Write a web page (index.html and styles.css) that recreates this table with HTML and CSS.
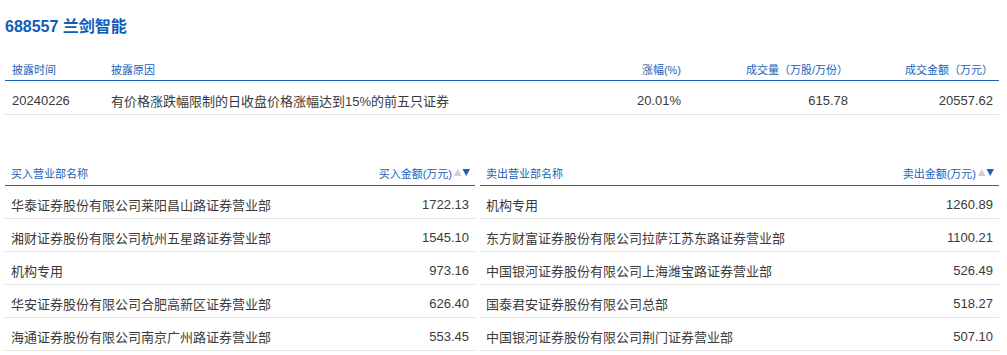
FILE: index.html
```html
<!DOCTYPE html>
<html lang="zh-CN">
<head>
<meta charset="utf-8">
<title>688557 兰剑智能</title>
<link rel="stylesheet" href="styles.css">
</head>
<body>
<div class="page">
  <h1 class="title">688557 兰剑智能</h1>

  <div class="summary">
    <div class="srow shead">
      <div class="c">披露时间</div>
      <div class="c">披露原因</div>
      <div class="c r">涨幅(%)</div>
      <div class="c r">成交量（万股/万份）</div>
      <div class="c r">成交金额（万元）</div>
    </div>
    <div class="srow sbody">
      <div class="c">20240226</div>
      <div class="c">有价格涨跌幅限制的日收盘价格涨幅达到15%的前五只证券</div>
      <div class="c r">20.01%</div>
      <div class="c r">615.78</div>
      <div class="c r">20557.62</div>
    </div>
  </div>

  <div class="deals">
    <div class="deal buy">
      <div class="drow dhead">
        <div class="c">买入营业部名称</div>
        <div class="c r">买入金额(万元)<svg class="sort" width="16" height="7" viewBox="0 0 16 7"><polygon points="0,7 3.75,0 7.5,7" fill="#cdcdcd"/><polygon points="8.5,0 16,0 12.25,7" fill="#1a5fb8"/></svg></div>
      </div>
      <div class="drow"><div class="c">华泰证券股份有限公司莱阳昌山路证券营业部</div><div class="c r">1722.13</div></div>
      <div class="drow"><div class="c">湘财证券股份有限公司杭州五星路证券营业部</div><div class="c r">1545.10</div></div>
      <div class="drow"><div class="c">机构专用</div><div class="c r">973.16</div></div>
      <div class="drow"><div class="c">华安证券股份有限公司合肥高新区证券营业部</div><div class="c r">626.40</div></div>
      <div class="drow"><div class="c">海通证券股份有限公司南京广州路证券营业部</div><div class="c r">553.45</div></div>
    </div>
    <div class="deal sell">
      <div class="drow dhead">
        <div class="c">卖出营业部名称</div>
        <div class="c r">卖出金额(万元)<svg class="sort" width="16" height="7" viewBox="0 0 16 7"><polygon points="0,7 3.75,0 7.5,7" fill="#cdcdcd"/><polygon points="8.5,0 16,0 12.25,7" fill="#1a5fb8"/></svg></div>
      </div>
      <div class="drow"><div class="c">机构专用</div><div class="c r">1260.89</div></div>
      <div class="drow"><div class="c">东方财富证券股份有限公司拉萨江苏东路证券营业部</div><div class="c r">1100.21</div></div>
      <div class="drow"><div class="c">中国银河证券股份有限公司上海潍宝路证券营业部</div><div class="c r">526.49</div></div>
      <div class="drow"><div class="c">国泰君安证券股份有限公司总部</div><div class="c r">518.27</div></div>
      <div class="drow"><div class="c">中国银河证券股份有限公司荆门证券营业部</div><div class="c r">507.10</div></div>
    </div>
  </div>
</div>
</body>
</html>
```

FILE: styles.css
```css
* { box-sizing: border-box; }
html, body {
  margin: 0;
  padding: 0;
  background: #ffffff;
}
body {
  font-family: "Liberation Sans", "Noto Sans CJK SC", sans-serif;
  color: #3a3a3a;
}
.page {
  padding: 0 8px 0 5px;
}
.title {
  margin: 0;
  padding-top: 17px;
  height: 37px;
  line-height: 20px;
  font-size: 16px;
  font-weight: bold;
  color: #0f5cb8;
}
.summary {
  margin-top: 20px;
}
.srow {
  display: grid;
  grid-template-columns: 100px 442px 140px 167px 145px;
  align-items: center;
}
.c {
  padding: 0 6px;
  white-space: nowrap;
}
.c.r { text-align: right; }
.shead {
  height: 24px;
  border-bottom: 1px solid #1d62b8;
  font-size: 11px;
  color: #1a5fb8;
}
.shead .c:first-child { padding-left: 7px; }
.sbody {
  height: 34px;
  padding-top: 5px;
  border-bottom: 1px solid #e3e3e3;
  font-size: 13px;
}
.sbody .c:first-child { padding-left: 7px; }
.deals {
  margin-top: 40px;
  display: flex;
  gap: 5px;
}
.deal.buy { width: 470px; }
.deal.sell { width: 519px; }
.drow {
  display: flex;
  justify-content: space-between;
  align-items: center;
  height: 33px;
  padding-top: 5px;
  border-bottom: 1px solid #e3e3e3;
  font-size: 13px;
}
.drow.dhead {
  height: 31px;
  border-bottom: 1px solid #1d62b8;
  font-size: 11px;
  color: #1a5fb8;
}
.dhead .c.r {
  display: flex;
  align-items: center;
  gap: 2px;
  padding-right: 5px;
}
.sort { display: block; }
```
